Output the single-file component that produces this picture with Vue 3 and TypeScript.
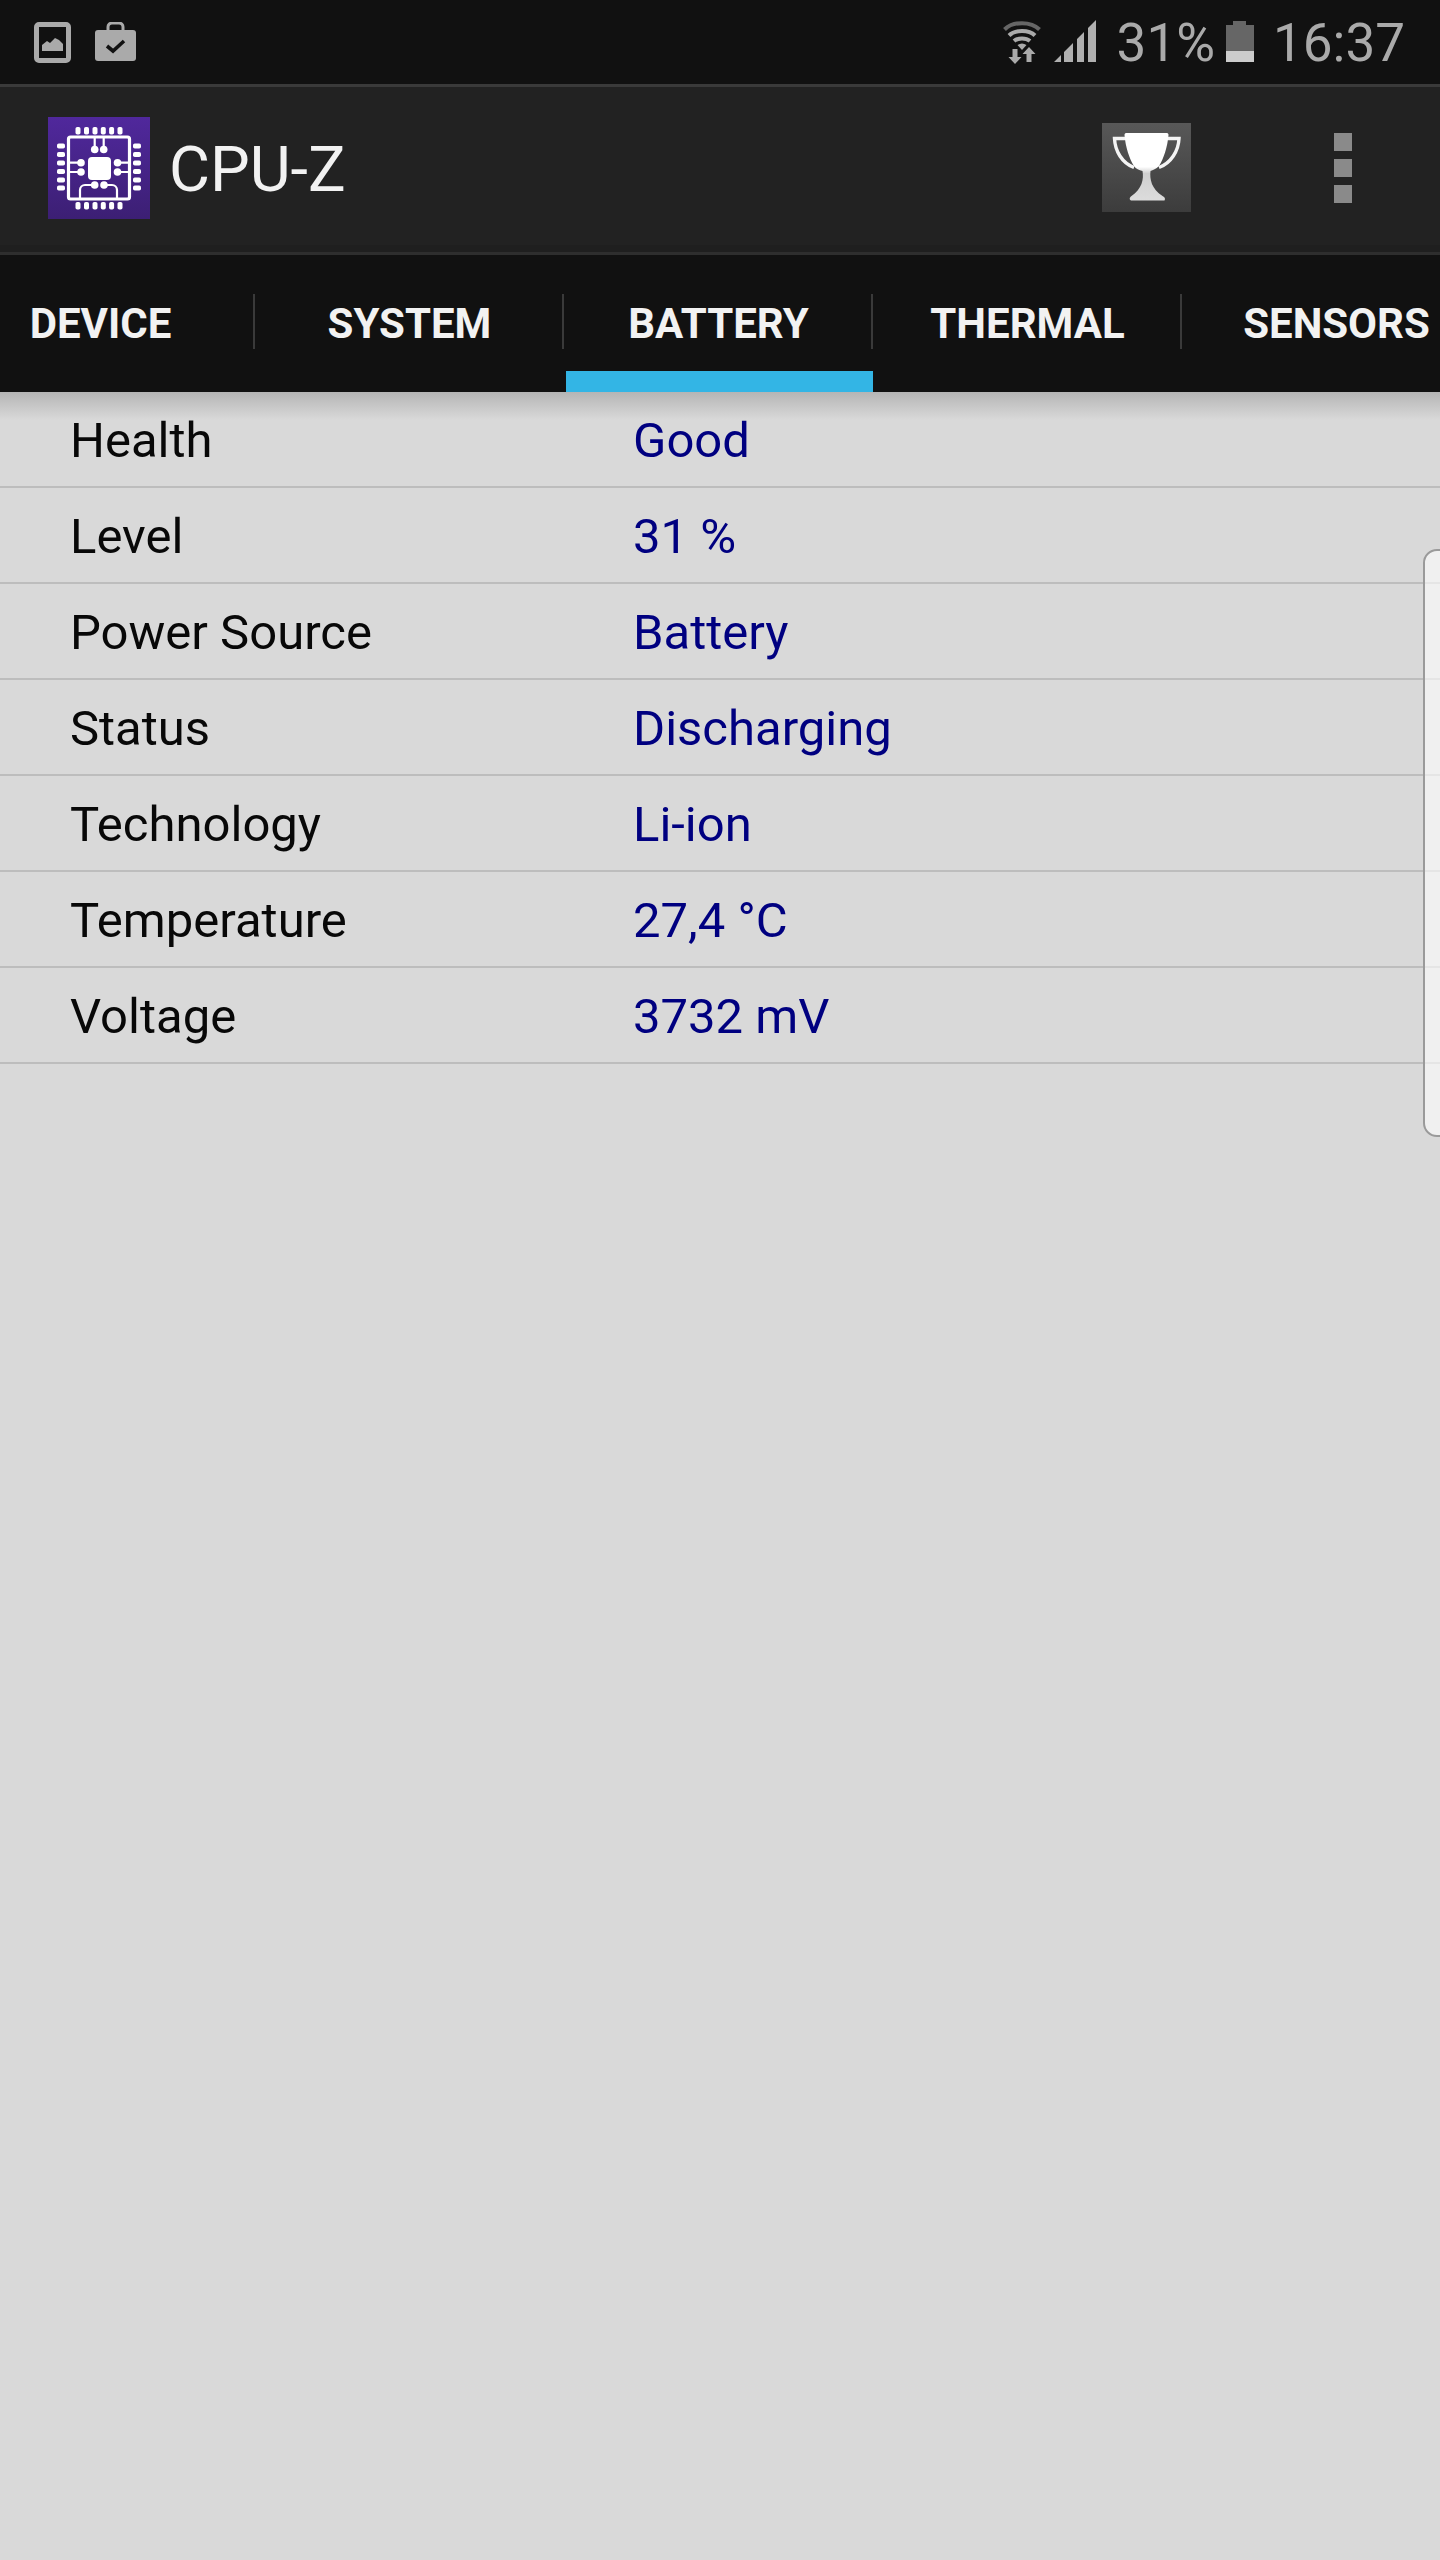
<script setup lang="ts">
const tabs: string[] = ['DEVICE', 'SYSTEM', 'BATTERY', 'THERMAL', 'SENSORS']
const rows: { label: string; value: string }[] = [
  { label: 'Health', value: 'Good' },
  { label: 'Level', value: '31 %' },
  { label: 'Power Source', value: 'Battery' },
  { label: 'Status', value: 'Discharging' },
  { label: 'Technology', value: 'Li-ion' },
  { label: 'Temperature', value: '27,4 °C' },
  { label: 'Voltage', value: '3732 mV' },
]
const pinPos: number[] = [30, 38.5, 47, 55.3, 63.6, 72]
const pinPosV: number[] = [29, 37.5, 46, 54.5, 63, 71]
</script>

<template>
  <div class="screen">
    <header class="status">
      <svg class="s-img" width="37" height="41" viewBox="0 0 37 41">
        <rect x="2.5" y="2.5" width="32" height="36" rx="2.5" fill="none" stroke="#aaa" stroke-width="5" />
        <path d="M8 29v-6l5-4 3 2 5-5 4 2 4 4v7z" fill="#aaa" />
      </svg>
      <svg class="s-bag" width="41" height="39" viewBox="0 0 41 39">
        <path d="M13 8V5a4 4 0 0 1 4-4h7a4 4 0 0 1 4 4v3" fill="none" stroke="#aaa" stroke-width="3" />
        <rect x="0" y="8" width="41" height="31" rx="3" fill="#aaa" />
        <path d="M12 24l6 5 11-10" fill="none" stroke="#111" stroke-width="3.6" />
      </svg>
      <div class="status-right">
        <svg class="s-wifi" width="38" height="44" viewBox="0 0 38 44">
          <path d="M1.500 9.500C10 1 28 1 36.500 9.500" fill="none" stroke="#666" stroke-width="4" />
          <path d="M6 15.500C12 9.500 26 9.500 32 15.500" fill="none" stroke="#aaa" stroke-width="4" />
          <path d="M11 21C15 17.500 23 17.500 27 21" fill="none" stroke="#aaa" stroke-width="4" />
          <path d="M14.500 25Q19 22 23.500 25L19 30z" fill="#aaa" />
          <path d="M9.500 29h5v8h4l-6.500 7-6.500-7h4z" fill="#aaa" />
          <path d="M26 27l6.500 7h-4v8h-5v-8h-4z" fill="#aaa" />
        </svg>
        <svg class="s-signal" width="42" height="42" viewBox="0 0 42 42">
          <path d="M0 42l7-7v7zM10 42V32l9-9v19zM23 42V19l7-7v30zM34 42V8l8-8v42z" fill="#b0b0b0" />
        </svg>
        <span class="s-text s-pct">31%</span>
        <svg class="s-batt" width="28" height="41" viewBox="0 0 28 41">
          <path d="M7 0h13v4h8v26H0V4h7z" fill="#666" />
          <rect x="0" y="30" width="28" height="11" fill="#ccc" />
        </svg>
        <span class="s-text s-time">16:37</span>
      </div>
    </header>

    <div class="appbar">
      <svg class="logo" width="102" height="102" viewBox="0 0 102 102">
        <defs>
          <linearGradient id="logoGrad" x1="0" y1="0" x2="0" y2="1">
            <stop offset="0" stop-color="#50289c" />
            <stop offset="1" stop-color="#3c1f74" />
          </linearGradient>
        </defs>
        <rect width="102" height="102" fill="url(#logoGrad)" />
        <g fill="#fff">
          <rect v-for="p in pinPos" :key="'t' + p" :x="p - 2.500" y="10" width="5" height="7.500" rx="1.800" />
          <rect v-for="p in pinPos" :key="'b' + p" :x="p - 2.500" y="85" width="5" height="7.500" rx="1.800" />
          <rect v-for="p in pinPosV" :key="'l' + p" x="9" :y="p - 2.500" width="8" height="5" rx="1.800" />
          <rect v-for="p in pinPosV" :key="'r' + p" x="85" :y="p - 2.500" width="8" height="5" rx="1.800" />
          <rect x="40" y="40" width="23" height="23" rx="4" />
          <circle cx="46.700" cy="32.500" r="3.800" />
          <circle cx="55.700" cy="32.500" r="3.800" />
          <circle cx="33" cy="45.700" r="3.800" />
          <circle cx="33" cy="55" r="3.800" />
          <circle cx="69.500" cy="45.700" r="3.800" />
          <circle cx="69.500" cy="55" r="3.800" />
          <circle cx="46.700" cy="68" r="3.800" />
          <circle cx="56" cy="68" r="3.800" />
        </g>
        <g fill="none" stroke="#fff" stroke-width="2.200">
          <rect x="20.500" y="20" width="61" height="62" rx="2" stroke-width="3.200" />
          <path d="M46.700 20v12M55.700 20v12M20 45.700h13M20 55h13M69.500 45.700h12M69.500 55h12" />
          <path d="M46.700 68H37a5 5 0 0 0-5 5v9M56 68h8a5 5 0 0 1 5 5v9" />
        </g>
      </svg>
      <span class="title">CPU-Z</span>
      <button class="trophy" type="button" aria-label="Trophy">
        <svg width="89" height="89" viewBox="0 0 89 89">
          <defs>
            <linearGradient id="cupGrad" x1="0" y1="0" x2="0" y2="1">
              <stop offset="0" stop-color="#fff" />
              <stop offset="0.5" stop-color="#fff" />
              <stop offset="0.6" stop-color="#cfcfcf" />
              <stop offset="1" stop-color="#dcdcdc" />
            </linearGradient>
          </defs>
          <path d="M23 15.500H12.500C13 28 20 40 32 44.500M66 15.500H77C76.500 28 69 40 57 44.500" fill="none" stroke="#f4f4f4" stroke-width="3.400" />
          <path d="M24 10h41c1 0 1.500 1 1.500 2-1 12-5 24-9.500 31-3 3-6 4-8.500 5-1 8 1 18 12 25 2.500 1.500 3 2.500 2 4.500H29c-2-1-1.500-3 .5-4.500C40 66 42 56 40.500 48 37 47 34 46 32 43c-4.500-7-8.500-19-9.500-31 0-1 .5-2 1.500-2z" fill="url(#cupGrad)" />
        </svg>
      </button>
      <div class="menu" aria-label="Menu"><i></i><i></i><i></i></div>
    </div>

    <nav class="tabs">
      <div v-for="(t, i) in tabs" :key="t" class="tab" :class="{ active: i === 2 }">{{ t }}</div>
    </nav>

    <main class="content">
      <div class="shade"></div>
      <div v-for="r in rows" :key="r.label" class="row">
        <span class="label">{{ r.label }}</span>
        <span class="value">{{ r.value }}</span>
      </div>
      <div class="edge"></div>
    </main>
  </div>
</template>

<style scoped>
.screen {
  width: 1440px;
  height: 2560px;
  display: flex;
  flex-direction: column;
  overflow: hidden;
  background: #d9d9d9;
  font-family: Roboto, "Liberation Sans", sans-serif;
}
.status {
  height: 84px;
  box-sizing: border-box;
  flex: none;
  display: flex;
  align-items: flex-start;
  padding: 0 35px 0 34px;
  background: #111;
}
.s-img { margin-top: 22px; }
.s-bag { margin: 22px 0 0 24px; }
.status-right {
  margin-left: auto;
  display: flex;
  align-items: flex-start;
  height: 84px;
}
.s-wifi { margin-top: 20px; }
.s-signal { margin: 20px 0 0 13px; }
.s-batt { margin: 21px 0 0 11px; }
.s-text {
  color: #aaa;
  font-size: 53px;
  line-height: 86px;
  height: 84px;
  font-weight: 400;
}
.s-pct { margin-left: 21px; }
.s-time { margin-left: 19px; }
.appbar {
  height: 171px;
  box-sizing: border-box;
  flex: none;
  display: flex;
  align-items: flex-start;
  background: #222;
  border-top: 3px solid #3a3a3a;
  border-bottom: 3px solid #2e2e2e;
  box-shadow: inset 0 -7px 0 #1f1f1f;
  padding-left: 48px;
}
.logo { margin-top: 30px; flex: none; }
.title {
  margin: 32px 0 0 19px;
  height: 102px;
  line-height: 102px;
  font-size: 63px;
  font-weight: 400;
  color: #f2f2f2;
}
.trophy {
  margin: 36px 0 0 auto;
  padding: 0;
  border: 0;
  width: 89px;
  height: 89px;
  background: linear-gradient(#585858, #3c3c3c);
}
.trophy svg { display: block; }
.menu {
  margin: 46px 88px 0 143px;
  width: 18px;
  display: flex;
  flex-direction: column;
  gap: 8px;
}
.menu i {
  display: block;
  width: 18px;
  height: 18px;
  background: #8a8a8a;
}
.tabs {
  height: 137px;
  flex: none;
  display: flex;
  background: #111;
  overflow: hidden;
}
.tab {
  position: relative;
  flex: none;
  width: 309px;
  box-sizing: border-box;
  text-align: center;
  color: #f2f2f2;
  font-size: 42px;
  font-weight: 700;
  line-height: 137px;
  height: 137px;
}
.tab:first-child { margin-left: -54px; }
.tab::after {
  content: "";
  position: absolute;
  right: 0;
  top: 39px;
  width: 2px;
  height: 55px;
  background: #3a3a3a;
}
.tab.active::before {
  content: "";
  position: absolute;
  left: 2px;
  right: 0;
  bottom: 0;
  height: 21px;
  background: #33b5e5;
}
.content {
  position: relative;
  flex: 1;
  background: #d9d9d9;
}
.shade {
  position: absolute;
  left: 0;
  right: 0;
  top: 0;
  height: 28px;
  background: linear-gradient(#b5b5b5, rgba(217, 217, 217, 0));
}
.row {
  position: relative;
  display: flex;
  height: 96px;
  box-sizing: border-box;
  align-items: center;
  padding: 3px 0 0 70px;
  border-bottom: 2px solid #bdbdbd;
  font-size: 49px;
}
.label {
  width: 563px;
  color: #080808;
}
.value { color: #000080; }
.edge {
  position: absolute;
  top: 157px;
  right: -20px;
  width: 37px;
  height: 588px;
  box-sizing: border-box;
  border: 2px solid #9a9a9a;
  border-radius: 14px;
  background: rgba(255, 255, 255, 0.6);
}
</style>
